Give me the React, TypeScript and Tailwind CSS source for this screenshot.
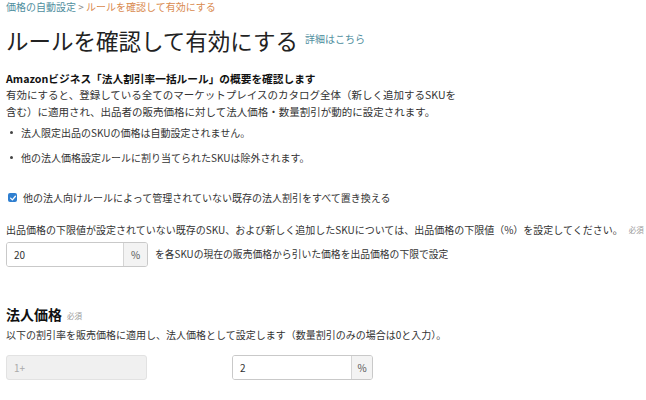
import React from "react";

export default function App() {
  return (
    <div className="w-[646px] h-[400px] overflow-hidden bg-white px-[6px] text-[#333] font-['Noto_Sans_CJK_JP','Noto_Sans',sans-serif]">
      <div className="pt-[1px] text-[10px] leading-[12px] whitespace-nowrap">
        <span className="text-[#4f8e9e]">価格の自動設定</span>
        <span className="text-[#888]"> &gt; </span>
        <span className="text-[#d98a4f]">ルールを確認して有効にする</span>
      </div>
      <div className="mt-[14px] flex items-center">
        <h1 className="text-[22.5px] leading-[26px] text-[#222] font-normal whitespace-nowrap">ルールを確認して有効にする</h1>
        <span className="ml-[7px] -mt-[3px] text-[10px] leading-[12px] text-[#4f8e9e]">詳細はこちら</span>
      </div>
      <div className="mt-[19px] text-[10.7px] leading-[14px] font-bold text-[#111] whitespace-nowrap">
        Amazonビジネス「法人割引率一括ルール」の概要を確認します
      </div>
      <p className="text-[10.5px] leading-[17px] whitespace-nowrap">
        有効にすると、登録している全てのマーケットプレイスのカタログ全体（新しく追加するSKUを
        <br />
        含む）に適用され、出品者の販売価格に対して法人価格・数量割引が動的に設定されます。
      </p>
      <ul className="mt-[4px] flex flex-col gap-[8px] text-[10px] leading-[17px]">
        <li className="flex items-center">
          <span className="ml-[4px] mr-[8px] h-[3px] w-[3px] rounded-full bg-[#444]" />
          法人限定出品のSKUの価格は自動設定されません。
        </li>
        <li className="flex items-center">
          <span className="ml-[4px] mr-[8px] h-[3px] w-[3px] rounded-full bg-[#444]" />
          他の法人価格設定ルールに割り当てられたSKUは除外されます。
        </li>
      </ul>
      <div className="mt-[23px] flex items-center text-[10px] leading-[17px]">
        <span className="ml-[2px] mr-[6px] flex h-[9px] w-[9px] items-center justify-center rounded-[2px] bg-[#2f7fd0]">
          <svg viewBox="0 0 10 10" className="h-[8px] w-[8px]">
            <path d="M2 5.2 L4.2 7.3 L8 2.8" fill="none" stroke="white" strokeWidth="1.6" strokeLinecap="round" strokeLinejoin="round" />
          </svg>
        </span>
        他の法人向けルールによって管理されていない既存の法人割引をすべて置き換える
      </div>
      <div className="mt-[15px] flex items-center text-[10px] leading-[17px] whitespace-nowrap">
        出品価格の下限値が設定されていない既存のSKU、および新しく追加したSKUについては、出品価格の下限値（%）を設定してください。
        <span className="ml-[6px] text-[7.5px] text-[#999]">必須</span>
      </div>
      <div className="mt-[4px] flex items-center text-[10px]">
        <div className="flex h-[25px] w-[142px] overflow-hidden rounded-[3px] border border-[#c9c9c9]">
          <div className="flex flex-1 items-center bg-white pl-[7px] text-[#333]">20</div>
          <div className="flex w-[24px] items-center justify-center border-l border-[#d5d5d5] bg-[#f3f3f3] text-[#555]">%</div>
        </div>
        <span className="ml-[7px] whitespace-nowrap text-[9.8px]">を各SKUの現在の販売価格から引いた価格を出品価格の下限で設定</span>
      </div>
      <div className="mt-[37px] flex items-center">
        <span className="text-[14px] leading-[20px] font-bold text-[#111]">法人価格</span>
        <span className="ml-[5px] mt-[3px] text-[7.5px] text-[#999]">必須</span>
      </div>
      <p className="mt-[1.5px] text-[10px] leading-[17px] whitespace-nowrap">
        以下の割引率を販売価格に適用し、法人価格として設定します（数量割引のみの場合は0と入力）。
      </p>
      <div className="mt-[12.5px] flex items-center gap-[85px] text-[10px]">
        <div className="flex h-[25px] w-[141px] items-center rounded-[3px] border border-[#e2e2e2] bg-[#f0f0f0] pl-[7px] text-[#aaa]">1+</div>
        <div className="flex h-[25px] w-[141px] overflow-hidden rounded-[3px] border border-[#c9c9c9]">
          <div className="flex flex-1 items-center bg-white pl-[7px] text-[#333]">2</div>
          <div className="flex w-[21px] items-center justify-center border-l border-[#d5d5d5] bg-[#f3f3f3] text-[#555]">%</div>
        </div>
      </div>
    </div>
  );
}
